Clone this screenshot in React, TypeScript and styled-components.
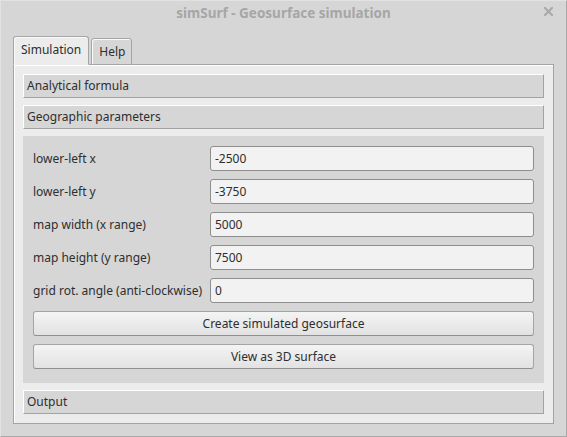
import React from "react";
import styled, { createGlobalStyle } from "styled-components";

const Global = createGlobalStyle`
  html, body { margin: 0; padding: 0; background: #d6d6d6; }
  * { box-sizing: border-box; }
  body { font-family: "Noto Sans", "Open Sans", sans-serif; }
`;

const Window = styled.div`
  width: 567px;
  height: 437px;
  background: #d6d6d6;
  border-top: 1px solid #e2e2e2;
  border-left: 1px solid #e2e2e2;
  border-right: 1px solid #a9a9a9;
  border-bottom: 1px solid #a9a9a9;
  display: flex;
  flex-direction: column;
`;

const TitleBar = styled.div`
  height: 24px;
  position: relative;
  display: flex;
  align-items: center;
  justify-content: center;
  font-weight: bold;
  font-size: 13.5px;
  color: #a6a6a6;
`;

const Close = styled.svg`
  position: absolute;
  right: 13px;
  top: 6px;
  width: 9px;
  height: 9px;
`;

const Body = styled.div`
  flex: 1;
  display: flex;
  flex-direction: column;
  padding: 11px 12px 12px 12px;
`;

const TabBar = styled.div`
  display: flex;
  align-items: flex-end;
  height: 29px;
  gap: 2px;
  position: relative;
  z-index: 1;
  margin-bottom: -1px;
`;

const Tab = styled.div<{ $active?: boolean }>`
  height: ${(p) => (p.$active ? "29px" : "27px")};
  padding: ${(p) => (p.$active ? "0 7px 3px 7px" : "0 6px 1px 7px")};
  display: flex;
  align-items: center;
  font-size: 12px;
  color: #2e2e2e;
  background: ${(p) => (p.$active ? "#ececec" : "#d6d6d6")};
  border: 1px solid #a5a5a5;
  border-bottom: ${(p) => (p.$active ? "1px solid #ececec" : "1px solid #a5a5a5")};
  border-radius: 3px 3px 0 0;
  box-shadow: inset 1px 1px 0 #fafafa;
`;

const Panel = styled.div`
  flex: 1;
  background: #ececec;
  border: 1px solid #a3a3a3;
  box-shadow: inset 1px 1px 0 #ffffff;
  padding: 9px;
  display: flex;
  flex-direction: column;
  gap: 7px;
`;

const SectionHeader = styled.div`
  height: 24px;
  flex: none;
  display: flex;
  align-items: center;
  padding-left: 3px;
  padding-bottom: 1px;
  font-size: 12px;
  color: #2e2e2e;
  background: #d6d6d6;
  border-top: 1px solid #ffffff;
  border-left: 1px solid #ffffff;
  border-right: 1px solid #a2a2a2;
  border-bottom: 1px solid #a2a2a2;
`;

const SectionBody = styled.div`
  flex: 1;
  background: #d6d6d6;
  padding: 10px 10px 0 10px;
  display: grid;
  grid-template-columns: 177px 1fr;
  grid-auto-rows: 25px;
  row-gap: 8px;
  align-content: start;
`;

const Label = styled.label`
  display: flex;
  align-items: center;
  font-size: 12px;
  color: #2e2e2e;
  padding-bottom: 1px;
`;

const Input = styled.input`
  height: 25px;
  width: 100%;
  background: #f2f2f2;
  border: 1px solid #8e8e8e;
  border-radius: 3px;
  padding: 0 0 1px 4px;
  font-family: "Noto Sans", "Open Sans", sans-serif;
  font-size: 12px;
  color: #2e2e2e;
  outline: none;
`;

const Button = styled.button`
  grid-column: 1 / span 2;
  height: 25px;
  border: 1px solid #a4a4a4;
  border-bottom-color: #8f8f8f;
  border-radius: 3px;
  background: linear-gradient(#f4f4f4, #e2e2e2);
  font-family: "Noto Sans", "Open Sans", sans-serif;
  font-size: 12px;
  color: #2e2e2e;
  padding: 0 0 1px 0;
`;

const fields: [string, string][] = [
  ["lower-left x", "-2500"],
  ["lower-left y", "-3750"],
  ["map width (x range)", "5000"],
  ["map height (y range)", "7500"],
  ["grid rot. angle (anti-clockwise)", "0"],
];

export default function App() {
  return (
    <>
      <Global />
      <Window>
        <TitleBar>
          simSurf - Geosurface simulation
          <Close viewBox="0 0 9 9">
            <path d="M1 1L8 8M8 1L1 8" stroke="#a9a9a9" strokeWidth="2.2" strokeLinecap="square" />
          </Close>
        </TitleBar>
        <Body>
          <TabBar>
            <Tab $active>Simulation</Tab>
            <Tab>Help</Tab>
          </TabBar>
          <Panel>
            <SectionHeader>Analytical formula</SectionHeader>
            <SectionHeader>Geographic parameters</SectionHeader>
            <SectionBody>
              {fields.map(([l, v]) => (
                <React.Fragment key={l}>
                  <Label>{l}</Label>
                  <Input defaultValue={v} />
                </React.Fragment>
              ))}
              <Button>Create simulated geosurface</Button>
              <Button>View as 3D surface</Button>
            </SectionBody>
            <SectionHeader>Output</SectionHeader>
          </Panel>
        </Body>
      </Window>
    </>
  );
}
